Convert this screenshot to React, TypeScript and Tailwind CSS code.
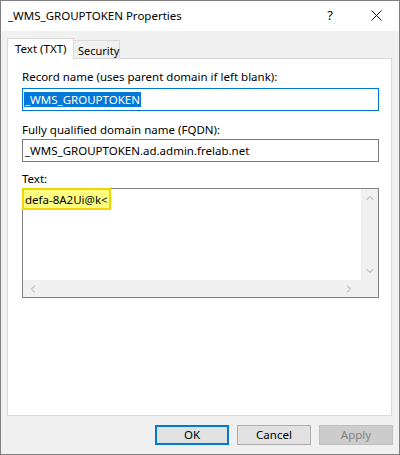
import { ChevronUp, ChevronDown, ChevronLeft, ChevronRight } from "lucide-react";

const font = { fontFamily: '"Noto Sans", "Liberation Sans", sans-serif' };

function Label({ children, className = "" }: { children: React.ReactNode; className?: string }) {
  return <div className={`text-[11.5px] leading-[16px] text-black ${className}`}>{children}</div>;
}

export default function App() {
  return (
    <div
      style={font}
      className="w-[400px] h-[455px] border border-[#7f7f7f] bg-[#f0f0f0] flex flex-col text-black"
    >
      {/* title bar */}
      <div className="h-[30px] bg-white flex items-center pl-[7px] pr-[17px]">
        <span className="text-[11.5px] leading-[16px] flex-1">_WMS_GROUPTOKEN Properties</span>
        <span className="text-[13px] mr-[38px]">?</span>
        <svg width="11" height="11" viewBox="0 0 11 11" className="mb-[1px]">
          <path d="M0.5 0.5 L10.5 10.5 M10.5 0.5 L0.5 10.5" stroke="#111" strokeWidth="1" />
        </svg>
      </div>

      {/* tabs */}
      <div className="flex items-end pl-[6px] mt-[7px]">
        <div className="relative z-10 -mb-px w-[67px] h-[21px] bg-white border border-b-0 border-[#d9d9d9] pl-[7px] pt-[2px] text-[11.5px] leading-[16px]">
          Text (TXT)
        </div>
        <div className="w-[46px] h-[18px] bg-[#f0f0f0] border border-b-0 border-l-0 border-[#d9d9d9] pl-[4px] pt-[2px] text-[11px] leading-[15px]">
          Security
        </div>
      </div>

      {/* panel */}
      <div className="ml-[6px] w-[385px] h-[358px] bg-white border border-[#d9d9d9] pl-[14px] pt-[10px]">
        <Label className="mb-[3px]">Record name (uses parent domain if left blank):</Label>
        <div className="w-[357px] h-[23px] border border-[#0078d7] flex items-center pl-[1px]">
          <span className="bg-[#0078d7] text-white text-[11.5px] leading-[15px] px-[1px]">_WMS_GROUPTOKEN</span>
        </div>

        <Label className="mt-[11px] mb-[1px]">Fully qualified domain name (FQDN):</Label>
        <div className="w-[357px] h-[23px] border border-[#7a7a7a] flex items-center pl-[2px] text-[11.5px]">
          _WMS_GROUPTOKEN.ad.admin.frelab.net
        </div>

        <Label className="mt-[9px] mb-[1px]">Text:</Label>
        <div className="w-[357px] h-[110px] border border-[#828282] flex flex-col">
          <div className="flex flex-1">
            <div className="flex-1 relative">
              <div className="absolute -left-px -top-px bg-[#ffff80] border-2 border-[#f2d600] h-[22px] px-[1px] flex items-center text-[11.5px] leading-[15px]">
                defa-8A2Ui@k&lt;
              </div>
            </div>
            <div className="w-[17px] bg-[#f0f0f0] flex flex-col items-center justify-between py-[3px]">
              <ChevronUp size={12} strokeWidth={2.2} color="#c3c3c3" />
              <ChevronDown size={12} strokeWidth={2.2} color="#c3c3c3" />
            </div>
          </div>
          <div className="h-[17px] bg-[#f0f0f0] flex items-center justify-between px-[4px]">
            <ChevronLeft size={12} strokeWidth={2.2} color="#c3c3c3" />
            <div className="flex items-center">
              <ChevronRight size={12} strokeWidth={2.2} color="#c3c3c3" />
              <div className="w-[19px]" />
            </div>
          </div>
        </div>
      </div>

      {/* buttons */}
      <div className="flex justify-end gap-[8px] pr-[6px] mt-[9px]">
        <button className="w-[74px] h-[20px] bg-[#e1e1e1] border-2 border-[#0078d7] text-[11.5px] leading-[14px]">OK</button>
        <button className="w-[74px] h-[20px] bg-[#e1e1e1] border border-[#adadad] text-[11.5px] leading-[14px]">Cancel</button>
        <button className="w-[74px] h-[20px] bg-[#cccccc] border border-[#bfbfbf] text-[#838383] text-[11.5px] leading-[14px]">Apply</button>
      </div>
    </div>
  );
}
